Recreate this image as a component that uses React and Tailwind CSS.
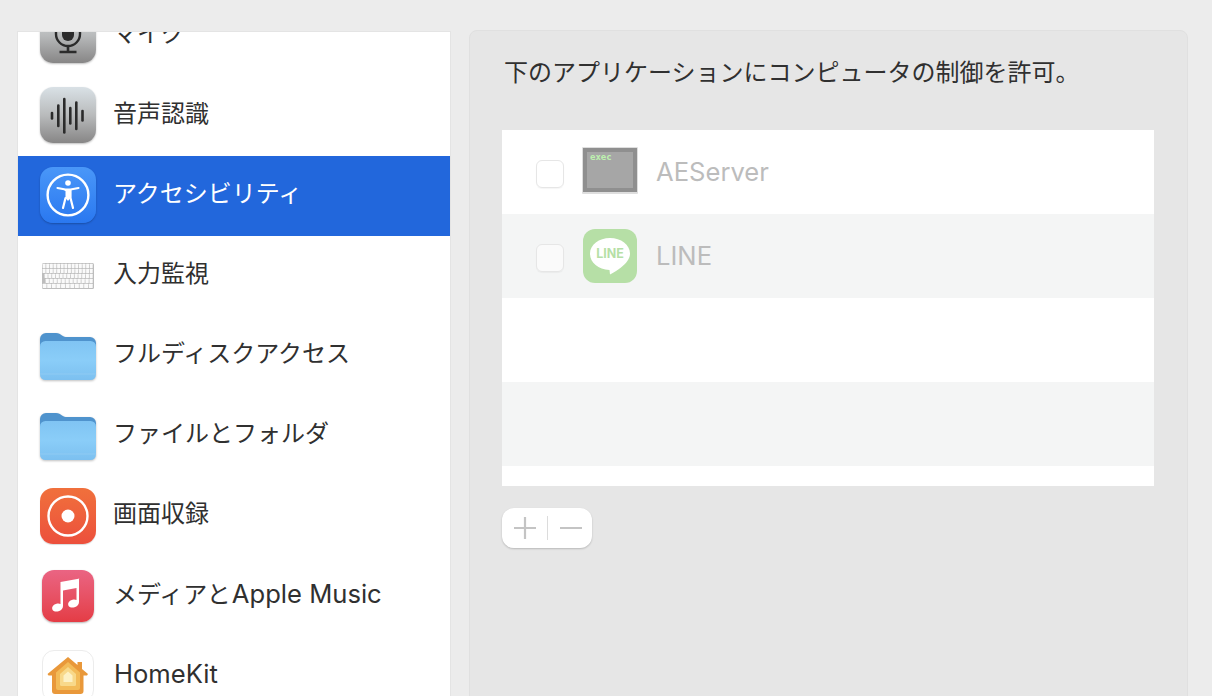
import React from 'react';

const font = { fontFamily: '"Inter", "Noto Sans CJK JP", sans-serif' };

function GrayIcon({ children }) {
    return (
        <div className="w-14 h-14 mb-0.5 rounded-[13px] bg-linear-to-b from-[#d9e1e6] via-[#b9bbbc] to-[#878686] shadow-[0_1px_2px_rgba(0,0,0,0.25)]">
            {children}
        </div>
    );
}

function MicIcon() {
    return (
        <GrayIcon>
            <svg width="56" height="56" viewBox="0 0 56 56" fill="none">
                <rect x="22" y="9" width="12" height="25" rx="6" fill="#2b2b2b" />
                <path d="M16 24v3a12 12 0 0 0 24 0v-3" stroke="#2b2b2b" strokeWidth="2.4" />
                <path d="M28 39v6M19.5 45h17" stroke="#2b2b2b" strokeWidth="2.6" />
            </svg>
        </GrayIcon>
    );
}

function WaveIcon() {
    const bars = [[12, 8], [18.3, 23], [24.3, 36], [30.3, 18], [36.3, 29], [42.5, 12]];
    return (
        <GrayIcon>
            <svg width="56" height="56" viewBox="0 0 56 56">
                {bars.map(([x, h]) => (
                    <rect key={x} x={x - 1.3} y={28.7 - h / 2} width="2.6" height={h} rx="1.3" fill="#2b2b2b" />
                ))}
            </svg>
        </GrayIcon>
    );
}

function AccessIcon() {
    return (
        <div className="w-14 h-14 mb-0.5 rounded-[13px] bg-linear-to-b from-[#4a97f8] to-[#2a78f0] shadow-[0_1px_2px_rgba(0,0,0,0.25)]">
            <svg width="56" height="56" viewBox="0 0 56 56" fill="none">
                <circle cx="28" cy="28" r="20.4" stroke="#fff" strokeWidth="2.4" />
                <circle cx="28" cy="16" r="2.8" fill="#fff" />
                <path d="M17.500 21 25.500 22.500h5L38.500 21" stroke="#fff" strokeWidth="2.2" strokeLinecap="round" strokeLinejoin="round" />
                <path d="M25.500 23h5v8l2.500 10M25.500 31l-2.500 10" stroke="#fff" strokeWidth="2.200" strokeLinecap="round" strokeLinejoin="round" />
                <path d="M25.500 23h5v8l-2.500 3-2.500-3z" fill="#fff" />
            </svg>
        </div>
    );
}

function KeyboardIcon() {
    const rows = [
        [14, 0],
        [14, 0],
        [13, 2],
        [12, 3],
        [11, 0],
    ];
    return (
        <svg width="52" height="26" viewBox="0 0 52 26">
            <rect x="0" y="0" width="52" height="26" rx="1.5" fill="#bdbdbd" />
            {rows.map(([count, start], r) =>
                Array.from({ length: count }).map((_, i) => (
                    <rect
                        key={`${r}-${i}`}
                        x={0.6 + start + i * ((50.8 - start) / count)}
                        y={0.8 + r * 5}
                        width={(50.8 - start) / count - 0.7}
                        height="4.2"
                        rx="0.5"
                        fill="#fafafa"
                    />
                ))
            )}
        </svg>
    );
}

function FolderIcon() {
    return (
        <svg width="56" height="48" viewBox="0 0 56 48" className="mt-px drop-shadow-[0_1px_1px_rgba(0,0,0,0.25)]">
            <defs>
                <linearGradient id="folderFront" x1="0" y1="0" x2="0" y2="1">
                    <stop offset="0" stopColor="#80c4f3" />
                    <stop offset="0.5" stopColor="#8acdf8" />
                    <stop offset="1" stopColor="#7cc0f0" />
                </linearGradient>
            </defs>
            <path d="M0 6a6 6 0 0 1 6-6h10c3 0 4 1 6 2.500s3 1.500 5 1.500h23a6 6 0 0 1 6 6v12H0z" fill="#4f93cd" />
            <rect x="0" y="8" width="56" height="39" rx="5.500" fill="url(#folderFront)" />
            <path d="M0 41h56" stroke="#93cdf3" strokeWidth="0.8" />
        </svg>
    );
}

function RecordIcon() {
    return (
        <div className="w-14 h-14 rounded-[13px] bg-linear-to-b from-[#f0703c] to-[#ec4f3c] shadow-[0_1px_1px_rgba(0,0,0,0.15)]">
            <svg width="56" height="56" viewBox="0 0 56 56" fill="none">
                <circle cx="28" cy="28" r="19.500" stroke="#fff" strokeWidth="2.400" />
                <circle cx="28" cy="28" r="6.500" fill="#fff" />
            </svg>
        </div>
    );
}

function MusicIcon() {
    return (
        <div className="w-[52px] h-[52px] rounded-xl bg-linear-to-b from-[#ea6483] to-[#e43c45] shadow-[0_1px_2px_rgba(0,0,0,0.3)]">
            <svg width="52" height="52" viewBox="0 0 52 52" fill="#fff">
                <path d="M38 8.500 18.500 12v22c-1-.6-2.500-.7-4-.3-3 .8-4.800 3-4.300 5.200.6 2.200 3.300 3.200 6.300 2.400 2.800-.8 4.500-2.600 4.500-5.300V20.500l13.500-2.500v12c-1-.6-2.500-.7-4-.3-3 .8-4.800 3-4.300 5.200.6 2.200 3.300 3.200 6.300 2.400 2.800-.8 4.500-2.600 4.500-5.300V9.500c0-.7-.4-1.100-1-1z" />
            </svg>
        </div>
    );
}

function HomeIcon() {
    return (
        <div className="w-[52px] h-[52px] rounded-xl bg-white border border-[#ececec]">
            <svg width="50" height="50" viewBox="0 0 50 50">
                <path d="M25 6 34.500 14V11h4.500v7l6 5-1 1.500h-3.500V40a3 3 0 0 1-3 3H12a3 3 0 0 1-3-3V24.500H5.500l-1-1.500z" fill="#e9983a" />
                <path d="M25 11 37 21.500V37a2 2 0 0 1-2 2H15a2 2 0 0 1-2-2V21.500z" fill="#f3bb58" />
                <path d="M25 16 33 23v10.500a1.500 1.500 0 0 1-1.500 1.500h-13a1.500 1.500 0 0 1-1.500-1.500V23z" fill="#f8d98a" />
                <path d="M25 20.500 29.500 24.500v6.500h-9v-6.500z" fill="#fdf1c4" />
            </svg>
        </div>
    );
}

function ExecIcon() {
    return (
        <svg width="56" height="47" viewBox="0 0 56 47" className="mb-1">
            <rect x="0" y="0" width="56" height="47" rx="1" fill="#dedede" />
            <rect x="1" y="1" width="54" height="44" fill="#8f8f8f" />
            <rect x="5" y="5" width="46" height="36" fill="#a6a6a6" />
            <text x="8" y="12.500" fontSize="9" fontWeight="700" fill="#bdf2ae" fontFamily="'DejaVu Sans Mono', monospace">exec</text>
        </svg>
    );
}

function LineIcon() {
    return (
        <svg width="54" height="54" viewBox="0 0 54 54">
            <rect x="0" y="0" width="54" height="54" rx="12" fill="#b6dfa6" />
            <path d="M27 9c11 0 20 6.800 20 15.500 0 5.500-4 10-9 14-3 2.400-6.500 4.500-11 7l-.5-4.500C15 40.500 7 33.500 7 24.500 7 15.800 16 9 27 9z" fill="#fff" />
            <text x="27" y="29" textAnchor="middle" fontSize="12.500" fontWeight="700" fill="#b6dfa6" fontFamily="Inter, sans-serif">LINE</text>
        </svg>
    );
}

function Latin({ children }) {
    return <span className="ml-px text-[25.6px]">{children}</span>;
}

const settings = [
    { id: 'mic', label: 'マイク', icon: <MicIcon /> },
    { id: 'speech', label: '音声認識', icon: <WaveIcon /> },
    { id: 'access', label: 'アクセシビリティ', icon: <AccessIcon />, selected: true },
    { id: 'input', label: '入力監視', icon: <KeyboardIcon /> },
    { id: 'disk', label: 'フルディスクアクセス', icon: <FolderIcon /> },
    { id: 'files', label: 'ファイルとフォルダ', icon: <FolderIcon /> },
    { id: 'screen', label: '画面収録', icon: <RecordIcon /> },
    { id: 'media', label: <>メディアと<Latin>Apple Music</Latin></>, icon: <MusicIcon /> },
    { id: 'home', label: <Latin>HomeKit</Latin>, icon: <HomeIcon /> },
];

function SettingRow({ label, icon, selected }) {
    return (
        <div className={`flex items-center h-20 shrink-0 pl-[22px] gap-[18px] ${selected ? 'bg-[#2267dc] text-white' : 'text-[#303030]'}`}>
            <div className="w-14 flex items-center justify-center">{icon}</div>
            <span className="-ml-px text-2xl leading-8 -mt-1">{label}</span>
        </div>
    );
}

function AppRow({ name, icon, striped }) {
    return (
        <div className={`flex items-center h-[84px] pl-[34px] ${striped ? 'bg-[#f4f5f5]' : ''}`}>
            <div className="w-7 h-7 mt-1 rounded-md bg-white/50 border border-[#e6e6e6] shadow-[0_1px_1px_rgba(0,0,0,0.04)]" />
            <div className="w-14 ml-[18px] flex items-center justify-center">{icon}</div>
            <span className="ml-[18px] text-[25.6px] leading-8 text-[#bcbcbc]">{name}</span>
        </div>
    );
}

export default function App() {
    return (
        <div className="h-[696px] overflow-hidden bg-[#ececec] flex pl-[17px] pt-[30px] gap-[18px]" style={font}>
            <div className="w-[434px] h-[680px] mt-px bg-white border border-[#e4e4e4] overflow-hidden">
                <div className="-mt-9 flex flex-col">
                    {settings.map((s) => (
                        <SettingRow key={s.id} label={s.label} icon={s.icon} selected={s.selected} />
                    ))}
                </div>
            </div>

            <div className="w-[719px] h-[680px] rounded-lg bg-[#e6e6e6] border border-[#e0e0e0] pl-8">
                <p className="pl-[2px] pt-[26px] h-[99px] text-2xl leading-8 text-[#303030]">
                    下のアプリケーションにコンピュータの制御を許可。
                </p>
                <div className="w-[652px] h-[356px] bg-white">
                    <AppRow name="AEServer" icon={<ExecIcon />} />
                    <AppRow name="LINE" icon={<LineIcon />} striped />
                    <div className="h-[84px]" />
                    <div className="h-[84px] bg-[#f4f5f5]" />
                </div>
                <div className="mt-[22px] w-[90px] h-10 rounded-xl bg-white shadow-[0_1px_2px_rgba(0,0,0,0.2)] flex items-center pl-3">
                    <svg width="22" height="22" viewBox="0 0 22 22" stroke="#c4c4c4" strokeWidth="2.2">
                        <path d="M11 0v22M0 11h22" />
                    </svg>
                    <div className="w-px h-6 ml-[11px] bg-[#dcdcdc]" />
                    <div className="w-[22px] h-0.5 ml-3 bg-[#c4c4c4]" />
                </div>
            </div>
        </div>
    );
}
